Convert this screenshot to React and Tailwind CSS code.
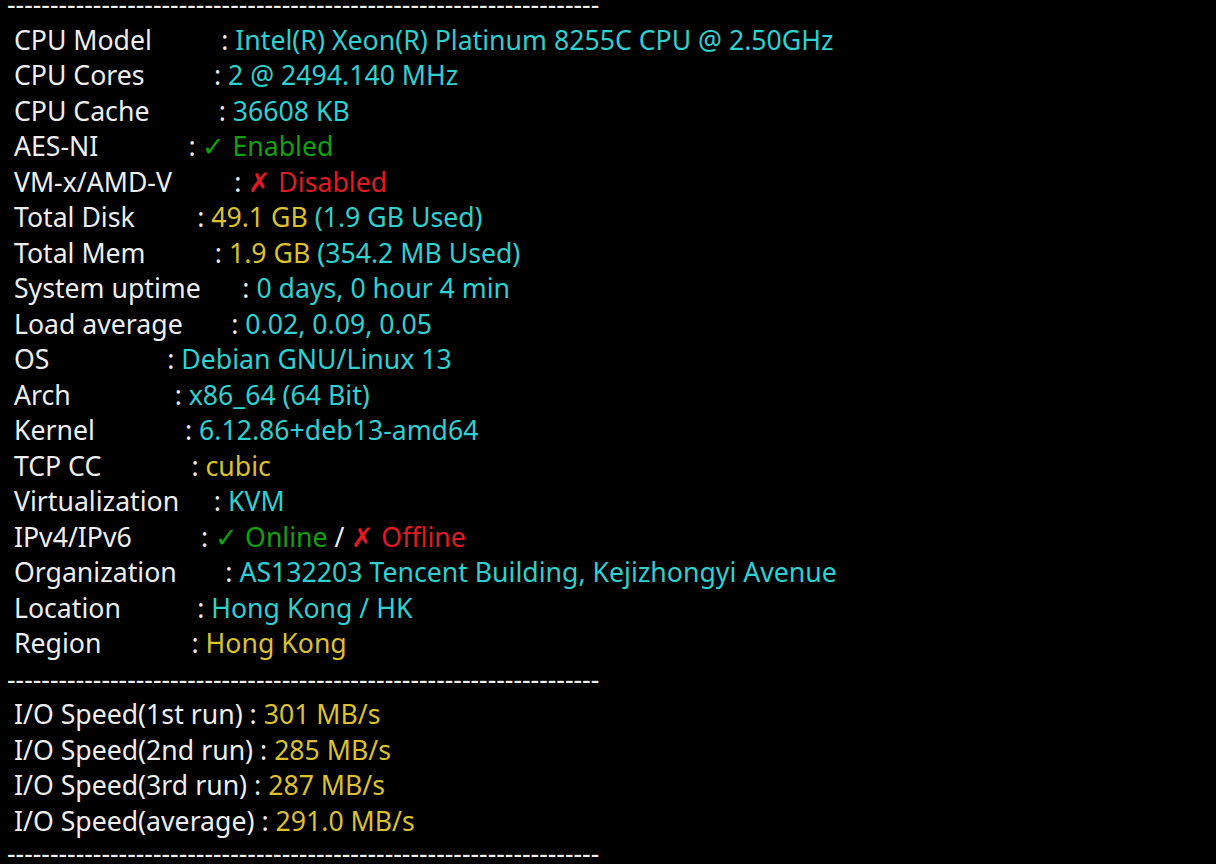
const C = "text-[#30d0d0]", G = "text-[#13a10e]", R = "text-[#e01b24]", Y = "text-[#dcc12e]", W = "text-[#eeeeee]";
const dash = "-".repeat(69);
const rows = [
  ["CPU Model", [[C, "Intel(R) Xeon(R) Platinum 8255C CPU @ 2.50GHz"]]],
  ["CPU Cores", [[C, "2 @ 2494.140 MHz"]]],
  ["CPU Cache", [[C, "36608 KB"]]],
  ["AES-NI", [[G, "✓ Enabled"]]],
  ["VM-x/AMD-V", [[R, "✗ Disabled"]]],
  ["Total Disk", [[Y, "49.1 GB "], [C, "(1.9 GB Used)"]]],
  ["Total Mem", [[Y, "1.9 GB "], [C, "(354.2 MB Used)"]]],
  ["System uptime", [[C, "0 days, 0 hour 4 min"]]],
  ["Load average", [[C, "0.02, 0.09, 0.05"]]],
  ["OS", [[C, "Debian GNU/Linux 13"]]],
  ["Arch", [[C, "x86_64 (64 Bit)"]]],
  ["Kernel", [[C, "6.12.86+deb13-amd64"]]],
  ["TCP CC", [[Y, "cubic"]]],
  ["Virtualization", [[C, "KVM"]]],
  ["IPv4/IPv6", [[G, "✓ Online"], [W, " / "], [R, "✗ Offline"]]],
  ["Organization", [[C, "AS132203 Tencent Building, Kejizhongyi Avenue"]]],
  ["Location", [[C, "Hong Kong / HK"]]],
  ["Region", [[Y, "Hong Kong"]]],
];
const io = [["I/O Speed(1st run)", "301 MB/s"], ["I/O Speed(2nd run)", "285 MB/s"], ["I/O Speed(3rd run)", "287 MB/s"], ["I/O Speed(average)", "291.0 MB/s"]];
function Line({ label, parts }) {
  return (
    <div className="h-[35.5px] leading-[35.5px]">
      <span className={W}>{(" " + label).padEnd(20, " ")}: </span>
      {parts.map(([c, t], i) => <span key={i} className={c}>{t}</span>)}
    </div>
  );
}
function Dash() {
  return <div className={"h-[35.5px] leading-[35.5px] " + W}>{dash}</div>;
}
export default function App() {
  return (
    <div className="w-[1216px] h-[864px] bg-black overflow-hidden pl-[7px]">
      <div className="mt-[-14px] whitespace-pre text-[26.67px] font-['Liberation_Mono']">
        <Dash />
        {rows.map(([l, p]) => <Line key={l} label={l} parts={p} />)}
        <Dash />
        {io.map(([l, v]) => <Line key={l} label={l} parts={[[Y, v]]} />)}
        <div className={"h-[35.5px] leading-[30px] " + W}>{dash}</div>
      </div>
    </div>
  );
}
